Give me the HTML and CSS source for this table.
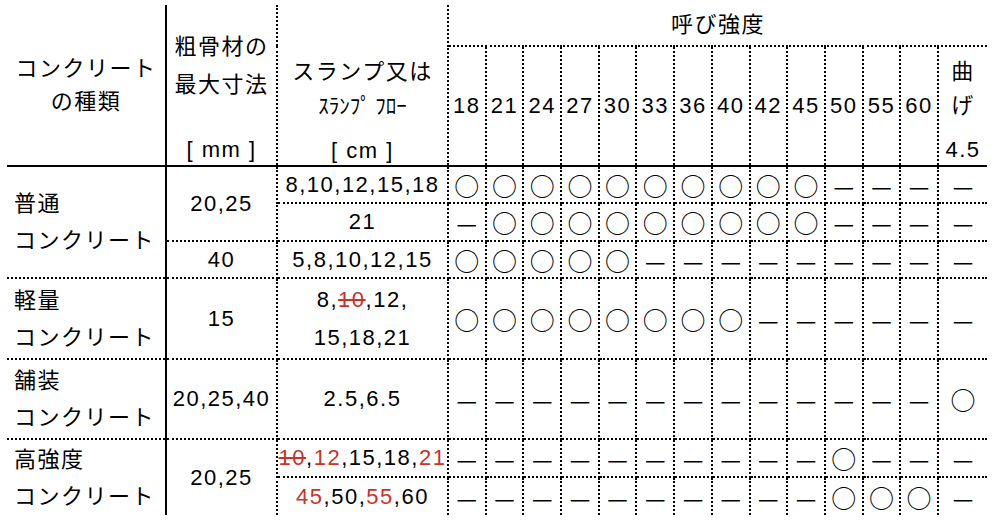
FILE: index.html
```html
<!DOCTYPE html>
<html lang="ja">
<head>
<meta charset="utf-8">
<title>コンクリートの種類と呼び強度</title>
<link rel="stylesheet" href="styles.css">
</head>
<body>
<div class="wrap">
<table class="spec">
<colgroup>
<col class="c-type"><col class="c-size"><col class="c-slump">
<col class="c-str"><col class="c-str"><col class="c-str"><col class="c-str"><col class="c-str"><col class="c-str"><col class="c-str"><col class="c-str"><col class="c-str"><col class="c-str"><col class="c-str"><col class="c-str"><col class="c-str">
<col class="c-bend">
</colgroup>
<tr class="h1">
<th rowspan="2" class="type-h">コンクリート<br>の種類</th>
<th rowspan="2" class="size-h"><div class="l38">粗骨材の<br>最大寸法</div><div class="unit u-size">[ mm ]</div></th>
<th rowspan="2" class="slump-h"><div class="l33">スランプ又は<br><span class="hw">ｽﾗﾝﾌﾟ ﾌﾛｰ</span></div><div class="unit u-slump">[ cm ]</div></th>
<th colspan="14" class="str-title">呼び強度</th>
</tr>
<tr class="h2">
<th class="n">18</th><th class="n">21</th><th class="n">24</th><th class="n">27</th><th class="n">30</th><th class="n">33</th><th class="n">36</th><th class="n">40</th><th class="n">42</th><th class="n">45</th><th class="n">50</th><th class="n">55</th><th class="n">60</th>
<th class="bend"><div class="bl">曲</div><div class="bl">げ</div><div class="bv">4.5</div></th>
</tr>
<tr class="r37">
<td rowspan="3" class="type">普通<br>コンクリート</td>
<td rowspan="2">20,25</td>
<td>8,10,12,15,18</td>
<td class="o">○</td><td class="o">○</td><td class="o">○</td><td class="o">○</td><td class="o">○</td><td class="o">○</td><td class="o">○</td><td class="o">○</td><td class="o">○</td><td class="o">○</td><td class="d">—</td><td class="d">—</td><td class="d">—</td><td class="d last">—</td>
</tr>
<tr class="r38">
<td>21</td>
<td class="d">—</td><td class="o">○</td><td class="o">○</td><td class="o">○</td><td class="o">○</td><td class="o">○</td><td class="o">○</td><td class="o">○</td><td class="o">○</td><td class="o">○</td><td class="d">—</td><td class="d">—</td><td class="d">—</td><td class="d last">—</td>
</tr>
<tr class="r37">
<td>40</td>
<td>5,8,10,12,15</td>
<td class="o">○</td><td class="o">○</td><td class="o">○</td><td class="o">○</td><td class="o">○</td><td class="d">—</td><td class="d">—</td><td class="d">—</td><td class="d">—</td><td class="d">—</td><td class="d">—</td><td class="d">—</td><td class="d">—</td><td class="d last">—</td>
</tr>
<tr class="r81">
<td class="type">軽量<br>コンクリート</td>
<td>15</td>
<td class="two">8,<s class="red">10</s>,12,<br>15,18,21</td>
<td class="o">○</td><td class="o">○</td><td class="o">○</td><td class="o">○</td><td class="o">○</td><td class="o">○</td><td class="o">○</td><td class="o">○</td><td class="d">—</td><td class="d">—</td><td class="d">—</td><td class="d">—</td><td class="d">—</td><td class="d last">—</td>
</tr>
<tr class="r80">
<td class="type">舗装<br>コンクリート</td>
<td>20,25,40</td>
<td>2.5,6.5</td>
<td class="d">—</td><td class="d">—</td><td class="d">—</td><td class="d">—</td><td class="d">—</td><td class="d">—</td><td class="d">—</td><td class="d">—</td><td class="d">—</td><td class="d">—</td><td class="d">—</td><td class="d">—</td><td class="d">—</td><td class="o last">○</td>
</tr>
<tr class="r38">
<td rowspan="2" class="type nb">高強度<br>コンクリート</td>
<td rowspan="2" class="nb">20,25</td>
<td><s class="red">10</s>,<span class="red">12</span>,15,18,<span class="red">21</span></td>
<td class="d">—</td><td class="d">—</td><td class="d">—</td><td class="d">—</td><td class="d">—</td><td class="d">—</td><td class="d">—</td><td class="d">—</td><td class="d">—</td><td class="d">—</td><td class="o">○</td><td class="d">—</td><td class="d">—</td><td class="d last">—</td>
</tr>
<tr class="r38 end">
<td><span class="red">45</span>,50,<span class="red">55</span>,60</td>
<td class="d">—</td><td class="d">—</td><td class="d">—</td><td class="d">—</td><td class="d">—</td><td class="d">—</td><td class="d">—</td><td class="d">—</td><td class="d">—</td><td class="d">—</td><td class="o">○</td><td class="o">○</td><td class="o">○</td><td class="d last">—</td>
</tr>
</table>
</div>
</body>
</html>
```

FILE: styles.css
```css
html, body {
  margin: 0;
  padding: 0;
  background: #ffffff;
}

body {
  font-family: "Liberation Sans", "Noto Sans CJK JP", sans-serif;
  font-size: 22px;
  color: #000000;
}

.wrap {
  padding: 5px 0 0 7px;
}

.spec {
  border-collapse: collapse;
  table-layout: fixed;
  width: 980px;
  letter-spacing: 1.5px;
}

.c-type { width: 159px; }
.c-size { width: 111px; }
.c-slump { width: 171px; }
.c-str { width: 37.7px; }
.c-bend { width: 49px; }

.spec th,
.spec td {
  padding: 0;
  font-weight: normal;
  text-align: center;
  vertical-align: middle;
  white-space: nowrap;
  border-right: 2px dotted #000;
  border-bottom: 2px dotted #000;
  line-height: 30px;
}

.h1 { height: 41px; }
.h2 { height: 120px; }
.r37 { height: 37px; }
.r38 { height: 38px; }
.r80 { height: 80px; }
.r81 { height: 81px; }

/* header */
.type-h {
  line-height: 33px !important;
  border-right: 2px solid #000 !important;
  border-bottom: 2px solid #000 !important;
}

.size-h,
.slump-h {
  vertical-align: top !important;
  border-bottom: 2px solid #000 !important;
}

.l38 {
  line-height: 38px;
  padding-top: 23px;
}

.l33 {
  line-height: 33px;
  padding-top: 50px;
}

.hw {
  letter-spacing: 0;
  font-size: 21px;
  font-family: "Noto Sans CJK JP", sans-serif;
}

.unit {
  line-height: 28px;
}

.u-size { margin-top: 32px; }
.u-slump { margin-top: 15px; }

.str-title {
  border-right: none !important;
}

.h2 .n {
  border-bottom: 2px solid #000;
}

.bend {
  vertical-align: top !important;
  border-right: none !important;
  border-bottom: 2px solid #000 !important;
  padding-top: 8px !important;
}

.bl { line-height: 34px; }
.bv { line-height: 30px; margin-top: 12px; }

/* body */
.type {
  text-align: left !important;
  padding-left: 7px !important;
  line-height: 37px !important;
  border-right: 2px solid #000 !important;
}

.two {
  line-height: 38px !important;
}

.o,
.d {
  font-family: "Noto Sans CJK JP", sans-serif;
  letter-spacing: 0;
  color: #000;
}

.o {
  font-size: 25px;
  line-height: 30px !important;
}

.d {
  font-size: 23px;
}

.last {
  border-right: none !important;
}

.nb,
.end td {
  border-bottom: none !important;
}

.red {
  color: #c8332b;
}

s.red {
  text-decoration-color: #c8332b;
  text-decoration-thickness: 2px;
}
```
